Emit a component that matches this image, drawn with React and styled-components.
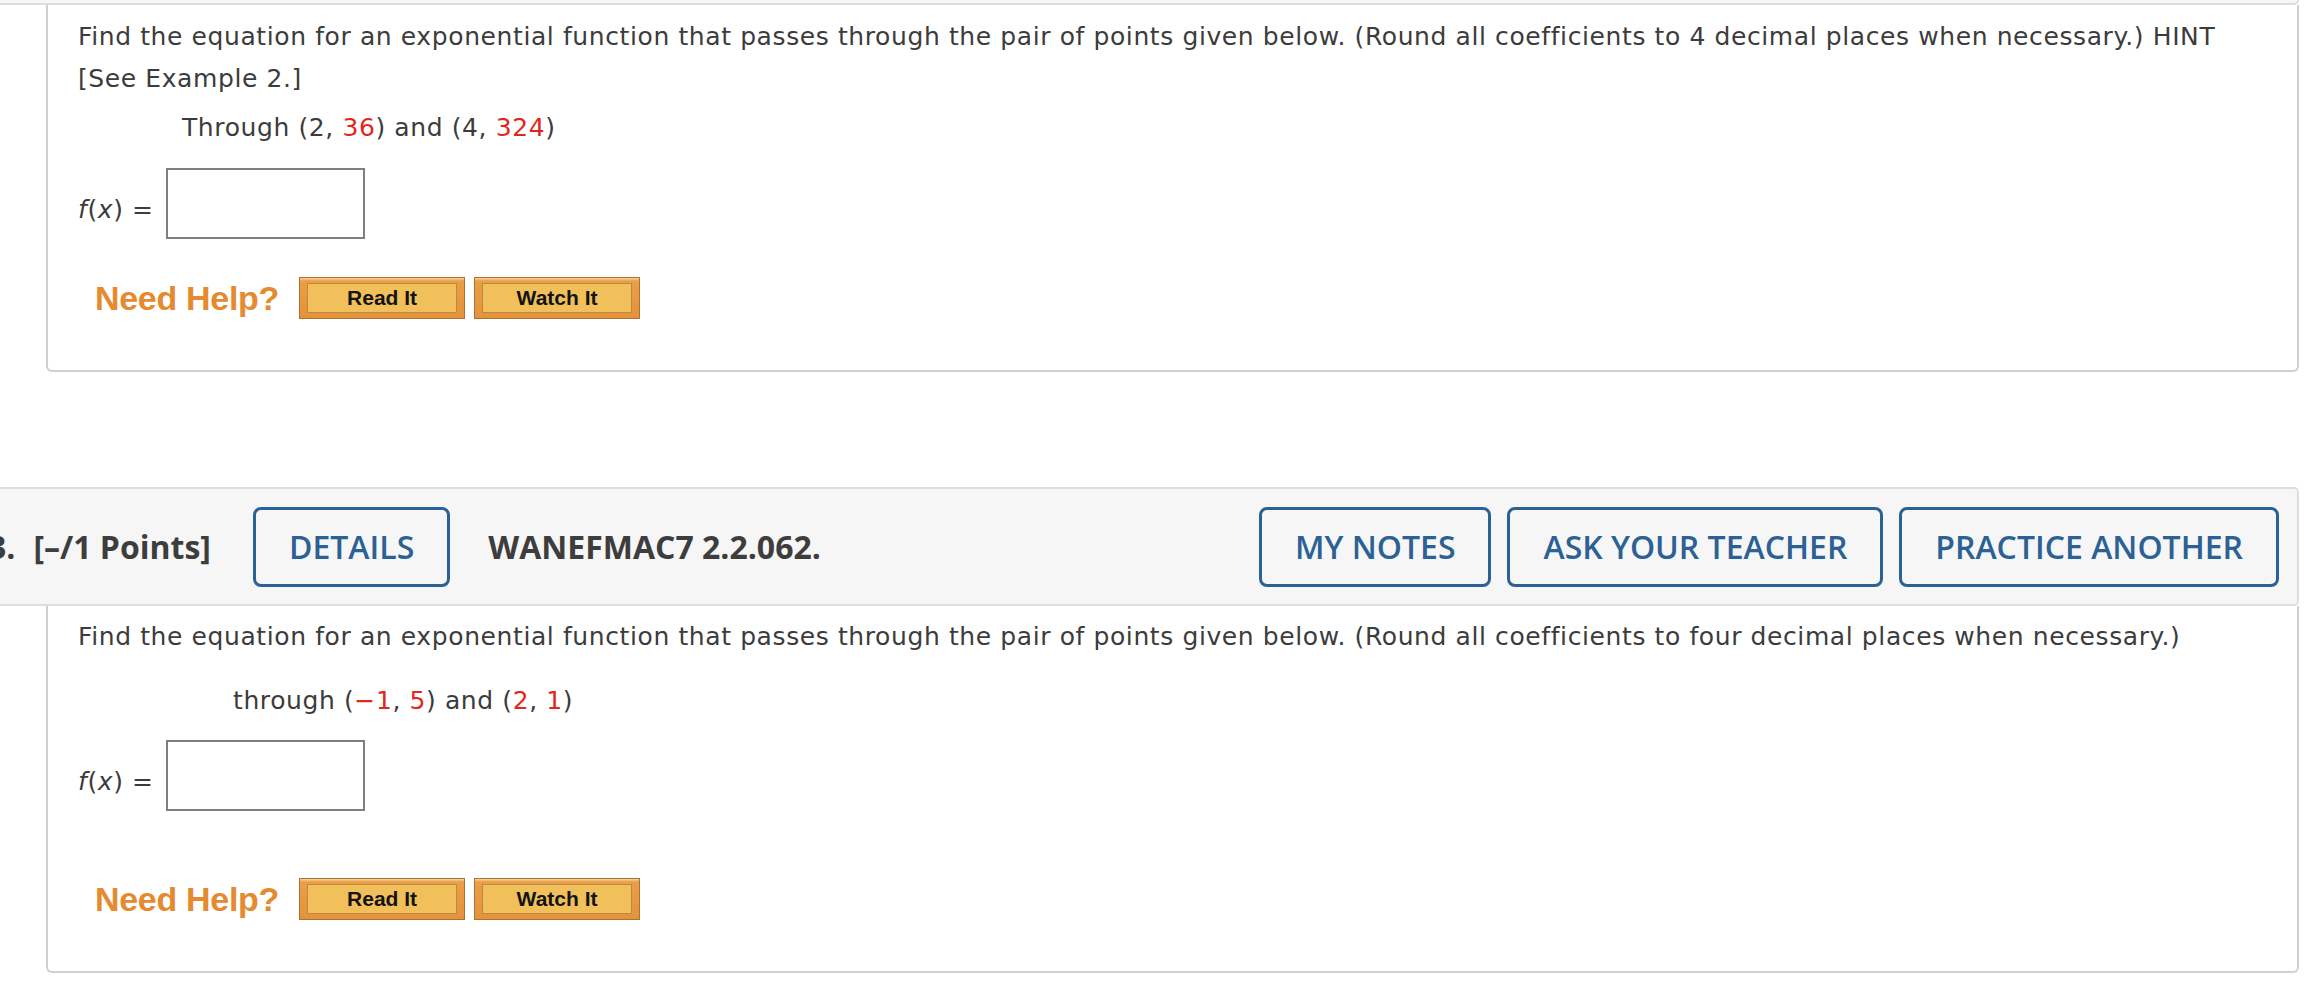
import React from "react";
import styled, { createGlobalStyle } from "styled-components";

const GlobalStyle = createGlobalStyle`
  html, body {
    margin: 0;
    padding: 0;
    background: #fff;
    overflow: hidden;
  }
  body {
    font-family: "DejaVu Sans", Verdana, sans-serif;
    color: #3c3c3c;
  }
`;

// the assignment is scrolled a little, so the first header sits above the fold
const Page = styled.div`
  width: 2323px;
  margin: -114px 0 0 -24px;
`;

const Question = styled.section`
  margin-bottom: ${(props) => props.$gap || 0}px;
`;

const Header = styled.div`
  display: flex;
  align-items: center;
  height: 115px;
  padding: 0 18px 0 10px;
  background: #f6f6f6;
  border: 2px solid #dddddd;
  border-radius: 0 5px 5px 0;
  font-family: "Open Sans", "Liberation Sans", sans-serif;
  font-size: 32px;
  color: #3d3d3d;
`;

const Num = styled.span`
  font-weight: 700;
  margin-right: 18px;
`;

const Points = styled.span`
  font-weight: 700;
  margin-right: 42px;
`;

const Code = styled.span`
  font-weight: 700;
  margin-left: 38px;
`;

const Actions = styled.div`
  display: flex;
  gap: 16px;
  margin-left: auto;
`;

const OutlineButton = styled.button`
  box-sizing: border-box;
  height: 80px;
  padding: 0 33px;
  border: 3px solid #2c6195;
  border-radius: 8px;
  background: transparent;
  color: #2c6195;
  font-family: "Open Sans", "Liberation Sans", sans-serif;
  font-weight: 600;
  font-size: 32px;
  white-space: nowrap;
`;

const Body = styled.div`
  margin-left: 70px;
  border: 2px solid #cfcfcf;
  border-top: none;
  border-radius: 0 0 6px 6px;
  padding: ${(props) => props.$top}px 30px 51px 30px;
  font-size: 25px;
  letter-spacing: 0.6px;
  line-height: 42px;
`;

const Prompt = styled.div`
  white-space: nowrap;
`;

const PointPair = styled.div`
  margin: ${(props) => props.$above}px 0 0 ${(props) => props.$indent}px;
`;

const Red = styled.span`
  color: #e3261c;
`;

const AnswerRow = styled.div`
  display: flex;
  align-items: center;
  margin-top: ${(props) => props.$above}px;
`;

const Label = styled.span`
  padding-top: 12px;
  line-height: 1;
  i {
    font-style: italic;
  }
`;

const AnswerBox = styled.input`
  box-sizing: border-box;
  width: 199px;
  height: 71px;
  margin-left: 12px;
  border: 2px solid #7f7f7f;
  background: #fff;
  outline: none;
`;

const HelpRow = styled.div`
  display: flex;
  align-items: center;
  margin: ${(props) => props.$above}px 0 0 17px;
`;

const NeedHelp = styled.span`
  font-family: "Liberation Sans", Arial, sans-serif;
  font-weight: 700;
  font-size: 34px;
  line-height: 1;
  letter-spacing: -0.3px;
  color: #e58a2f;
  margin-right: 20px;
`;

const HelpButton = styled.button`
  box-sizing: border-box;
  width: 166px;
  height: 42px;
  padding: 5px 7px;
  margin-right: 9px;
  border: 1px solid #a87434;
  background: linear-gradient(#f8d3a0 0, #eb9e45 3px, #e6923a 100%);
  cursor: pointer;
`;

const HelpFace = styled.span`
  box-sizing: border-box;
  display: flex;
  align-items: center;
  justify-content: center;
  height: 100%;
  border: 1px solid #b98a45;
  background: #f2c05a;
  font-family: "Liberation Sans", Arial, sans-serif;
  font-weight: 700;
  font-size: 21px;
  color: #141414;
`;

function QuestionHeader({ number, code }) {
  return (
    <Header>
      <Num>{number}</Num>
      <Points>[–/1 Points]</Points>
      <OutlineButton>DETAILS</OutlineButton>
      <Code>{code}</Code>
      <Actions>
        <OutlineButton>MY NOTES</OutlineButton>
        <OutlineButton>ASK YOUR TEACHER</OutlineButton>
        <OutlineButton>PRACTICE ANOTHER</OutlineButton>
      </Actions>
    </Header>
  );
}

function Answer({ above }) {
  return (
    <AnswerRow $above={above}>
      <Label>
        <i>f</i>(<i>x</i>) =
      </Label>
      <AnswerBox type="text" />
    </AnswerRow>
  );
}

function Help({ above }) {
  return (
    <HelpRow $above={above}>
      <NeedHelp>Need Help?</NeedHelp>
      <HelpButton>
        <HelpFace>Read It</HelpFace>
      </HelpButton>
      <HelpButton>
        <HelpFace>Watch It</HelpFace>
      </HelpButton>
    </HelpRow>
  );
}

export default function App() {
  return (
    <>
      <GlobalStyle />
      <Page>
        <Question $gap={115}>
          <QuestionHeader number="2." code="WANEFMAC7 2.2.061." />
          <Body $top={11}>
            <Prompt>
              Find the equation for an exponential function that passes through the pair of
              points given below. (Round all coefficients to 4 decimal places when necessary.)
              HINT
            </Prompt>
            <Prompt>[See Example 2.]</Prompt>
            <PointPair $above={7} $indent={104}>
              Through (2, <Red>36</Red>) and (4, <Red>324</Red>)
            </PointPair>
            <Answer above={19} />
            <Help above={38} />
          </Body>
        </Question>

        <Question>
          <QuestionHeader number="3." code="WANEFMAC7 2.2.062." />
          <Body $top={10}>
            <Prompt>
              Find the equation for an exponential function that passes through the pair of
              points given below. (Round all coefficients to four decimal places when
              necessary.)
            </Prompt>
            <PointPair $above={22} $indent={155}>
              through (<Red>−1</Red>, <Red>5</Red>) and (<Red>2</Red>, <Red>1</Red>)
            </PointPair>
            <Answer above={18} />
            <Help above={67} />
          </Body>
        </Question>
      </Page>
    </>
  );
}
